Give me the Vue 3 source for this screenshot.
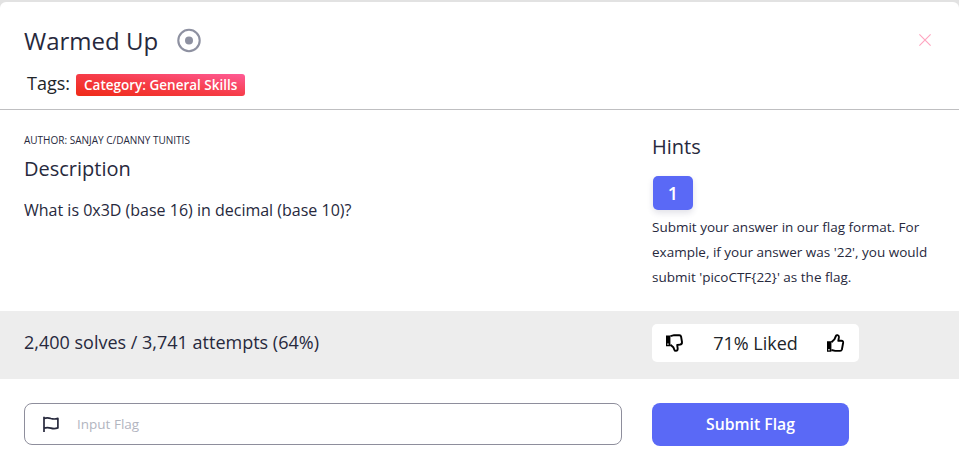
<script setup>
import { ref } from 'vue'

const flag = ref('')
const challenge = {
  title: 'Warmed Up',
  category: 'Category: General Skills',
  author: 'SANJAY C/DANNY TUNITIS',
  description: 'What is 0x3D (base 16) in decimal (base 10)?',
  stats: '2,400 solves / 3,741 attempts (64%)',
  liked: '71% Liked',
  hint: "Submit your answer in our flag format. For example, if your answer was '22', you would submit 'picoCTF{22}' as the flag.",
}
</script>

<template>
  <div class="backdrop">
    <div class="modal">
      <header class="head">
        <div class="title-row">
          <h1 class="title">{{ challenge.title }}</h1>
          <svg class="target" viewBox="0 0 24 24">
            <circle cx="12" cy="11.5" r="10.7" fill="none" stroke="#8e91a1" stroke-width="2.1" />
            <circle cx="12" cy="11.5" r="4" fill="#8e91a1" />
          </svg>
          <button class="close" aria-label="Close">
            <svg viewBox="0 0 12 12">
              <path d="M0.4 0.4L11.6 11.6M11.6 0.4L0.4 11.6" stroke="#ffa3bf" stroke-width="1.1" />
            </svg>
          </button>
        </div>
        <div class="tags">
          <span class="tags-label">Tags:</span>
          <span class="tag">{{ challenge.category }}</span>
        </div>
      </header>

      <section class="body columns">
        <div class="about">
          <div class="author">AUTHOR: {{ challenge.author }}</div>
          <h2 class="subtitle">Description</h2>
          <p class="question">{{ challenge.description }}</p>
        </div>
        <div class="hints">
          <h2 class="subtitle">Hints</h2>
          <button class="hint-button">1</button>
          <p class="hint">{{ challenge.hint }}</p>
        </div>
      </section>

      <section class="stats columns">
        <div class="solves">{{ challenge.stats }}</div>
        <div class="rating">
          <svg class="thumb" viewBox="0 0 18 18">
            <path class="solid" fill-rule="evenodd" d="M0 1.4H4.4V12.2H0ZM1.3 9.6V10.8H2.6V9.6Z" />
            <path class="line" d="M4.4 2.2L8.2 1.2H13.4Q14.8 1.2 15.1 2.8L16 8Q16.2 10.4 14 10.6L11.2 11L11.7 14.6Q11.7 16.9 10 16.9Q8.6 16.9 8.2 15.4L7.3 13.2L4.4 10.7" />
          </svg>
          <span>{{ challenge.liked }}</span>
          <svg class="thumb" viewBox="0 0 18 18">
            <path class="solid" fill-rule="evenodd" d="M0 7.2H4.4V17.8H0ZM1.3 15.1V16.4H2.6V15.1Z" />
            <path class="line" d="M4.4 8.2L7.4 5.4L8.9 2Q9.4 0.9 10.6 1.2Q12.1 1.6 11.9 3.4L11.3 6.8H14.4Q16.4 7 16.1 9L14.9 15.5Q14.5 16.9 13.1 16.9H8.2L4.4 16" />
          </svg>
        </div>
      </section>

      <section class="submit columns">
        <label class="field">
          <svg class="flag" viewBox="0 0 17 17">
            <path d="M2 0.8V16" />
            <path d="M2 2.4Q5.4 1.2 8.9 2.5Q12.3 3.5 15.9 2.4V11.9Q12.3 13.2 8.9 12.1Q5.4 11 2 12.1" />
          </svg>
          <input v-model="flag" class="input" placeholder="Input Flag">
        </label>
        <button class="submit-button">Submit Flag</button>
      </section>
    </div>
  </div>
</template>

<style>
body {
  margin: 0;
  background: #e2e2e2;
}
</style>

<style scoped>
* {
  box-sizing: border-box;
}

.backdrop {
  height: 466px;
  padding-top: 2px;
  overflow: hidden;
  background: #e2e2e2;
  font-family: "Open Sans", sans-serif;
  color: #27293d;
}

.modal {
  height: 470px;
  border-radius: 6px;
  background: #fff;
}

h1, h2, p {
  margin: 0;
  font-weight: 400;
}

button {
  padding: 0;
  border: 0;
  font-family: inherit;
  color: #fff;
  background: #5a69f6;
}

.head {
  height: 108px;
  padding: 20px 24px 0;
  border-bottom: 1px solid #bfbfc1;
}

.title-row {
  display: flex;
  align-items: center;
  height: 38px;
}

.title {
  font-size: 24px;
  line-height: 38px;
}

.target {
  width: 24px;
  height: 24px;
  margin-left: 19px;
  overflow: visible;
}

.close {
  display: flex;
  margin: -2px 4px 0 auto;
  background: none;
}

.close svg {
  width: 12px;
  height: 12px;
}

.tags {
  display: flex;
  align-items: center;
  gap: 6px;
  height: 22px;
  margin: 14px 0 0 3px;
}

.tags-label {
  padding-bottom: 4px;
  font-size: 18px;
  line-height: 22px;
  color: #212529;
}

.tag {
  height: 22px;
  padding: 0 8px;
  border-radius: 3px;
  background: linear-gradient(to top right, #ef2a16, #f63c48 50%, #ff5b96);
  font-size: 13.5px;
  font-weight: 600;
  line-height: 22px;
  color: #fff;
}

.columns {
  display: grid;
  grid-template-columns: 598px 283px;
  column-gap: 30px;
  padding: 0 24px;
}

.body {
  height: 201px;
}

.about {
  padding-top: 22px;
}

.author {
  font-size: 10px;
  line-height: 16px;
}

.subtitle {
  font-size: 20px;
  line-height: 28px;
}

.about .subtitle {
  margin-top: 7px;
}

.question {
  margin-top: 15px;
  font-size: 16px;
  line-height: 24px;
}

.hints {
  padding-top: 23px;
}

.hint-button {
  display: block;
  width: 40px;
  height: 34px;
  margin: 15px 0 0 1px;
  border-radius: 5px;
  box-shadow: 0 3px 6px rgba(40, 45, 90, 0.14);
  font-size: 18px;
  font-weight: 600;
}

.hint {
  margin-top: 5px;
  font-size: 13.5px;
  line-height: 25px;
}

.stats {
  align-items: start;
  height: 68px;
  background: #ededed;
}

.solves {
  padding-top: 18px;
  font-size: 18px;
  line-height: 27px;
}

.rating {
  display: flex;
  align-items: center;
  justify-content: space-between;
  width: 207px;
  height: 38px;
  margin-top: 13px;
  padding: 0 14px;
  border-radius: 5px;
  background: #fff;
  font-size: 18px;
  color: #212529;
}

.thumb {
  width: 18px;
  height: 18px;
}

.solid {
  fill: #000;
}

.line {
  fill: none;
  stroke: #000;
  stroke-width: 1.9;
  stroke-linejoin: round;
}

.submit {
  padding-top: 24px;
}

.field {
  display: flex;
  align-items: center;
  height: 42px;
  padding: 0 18px 0 17px;
  border: 1px solid #8e8e9c;
  border-radius: 8px;
}

.flag {
  width: 17px;
  height: 17px;
  fill: none;
  stroke: #27293d;
  stroke-width: 1.7;
  stroke-linejoin: round;
}

.input {
  flex: 1;
  margin-left: 18px;
  padding: 0;
  border: 0;
  outline: none;
  background: none;
  font: 13.5px "Open Sans", sans-serif;
}

.input::placeholder {
  color: #b2b5bf;
}

.submit-button {
  width: 197px;
  height: 43px;
  padding-bottom: 2px;
  border-radius: 8px;
  font-size: 15.75px;
  font-weight: 600;
}
</style>
